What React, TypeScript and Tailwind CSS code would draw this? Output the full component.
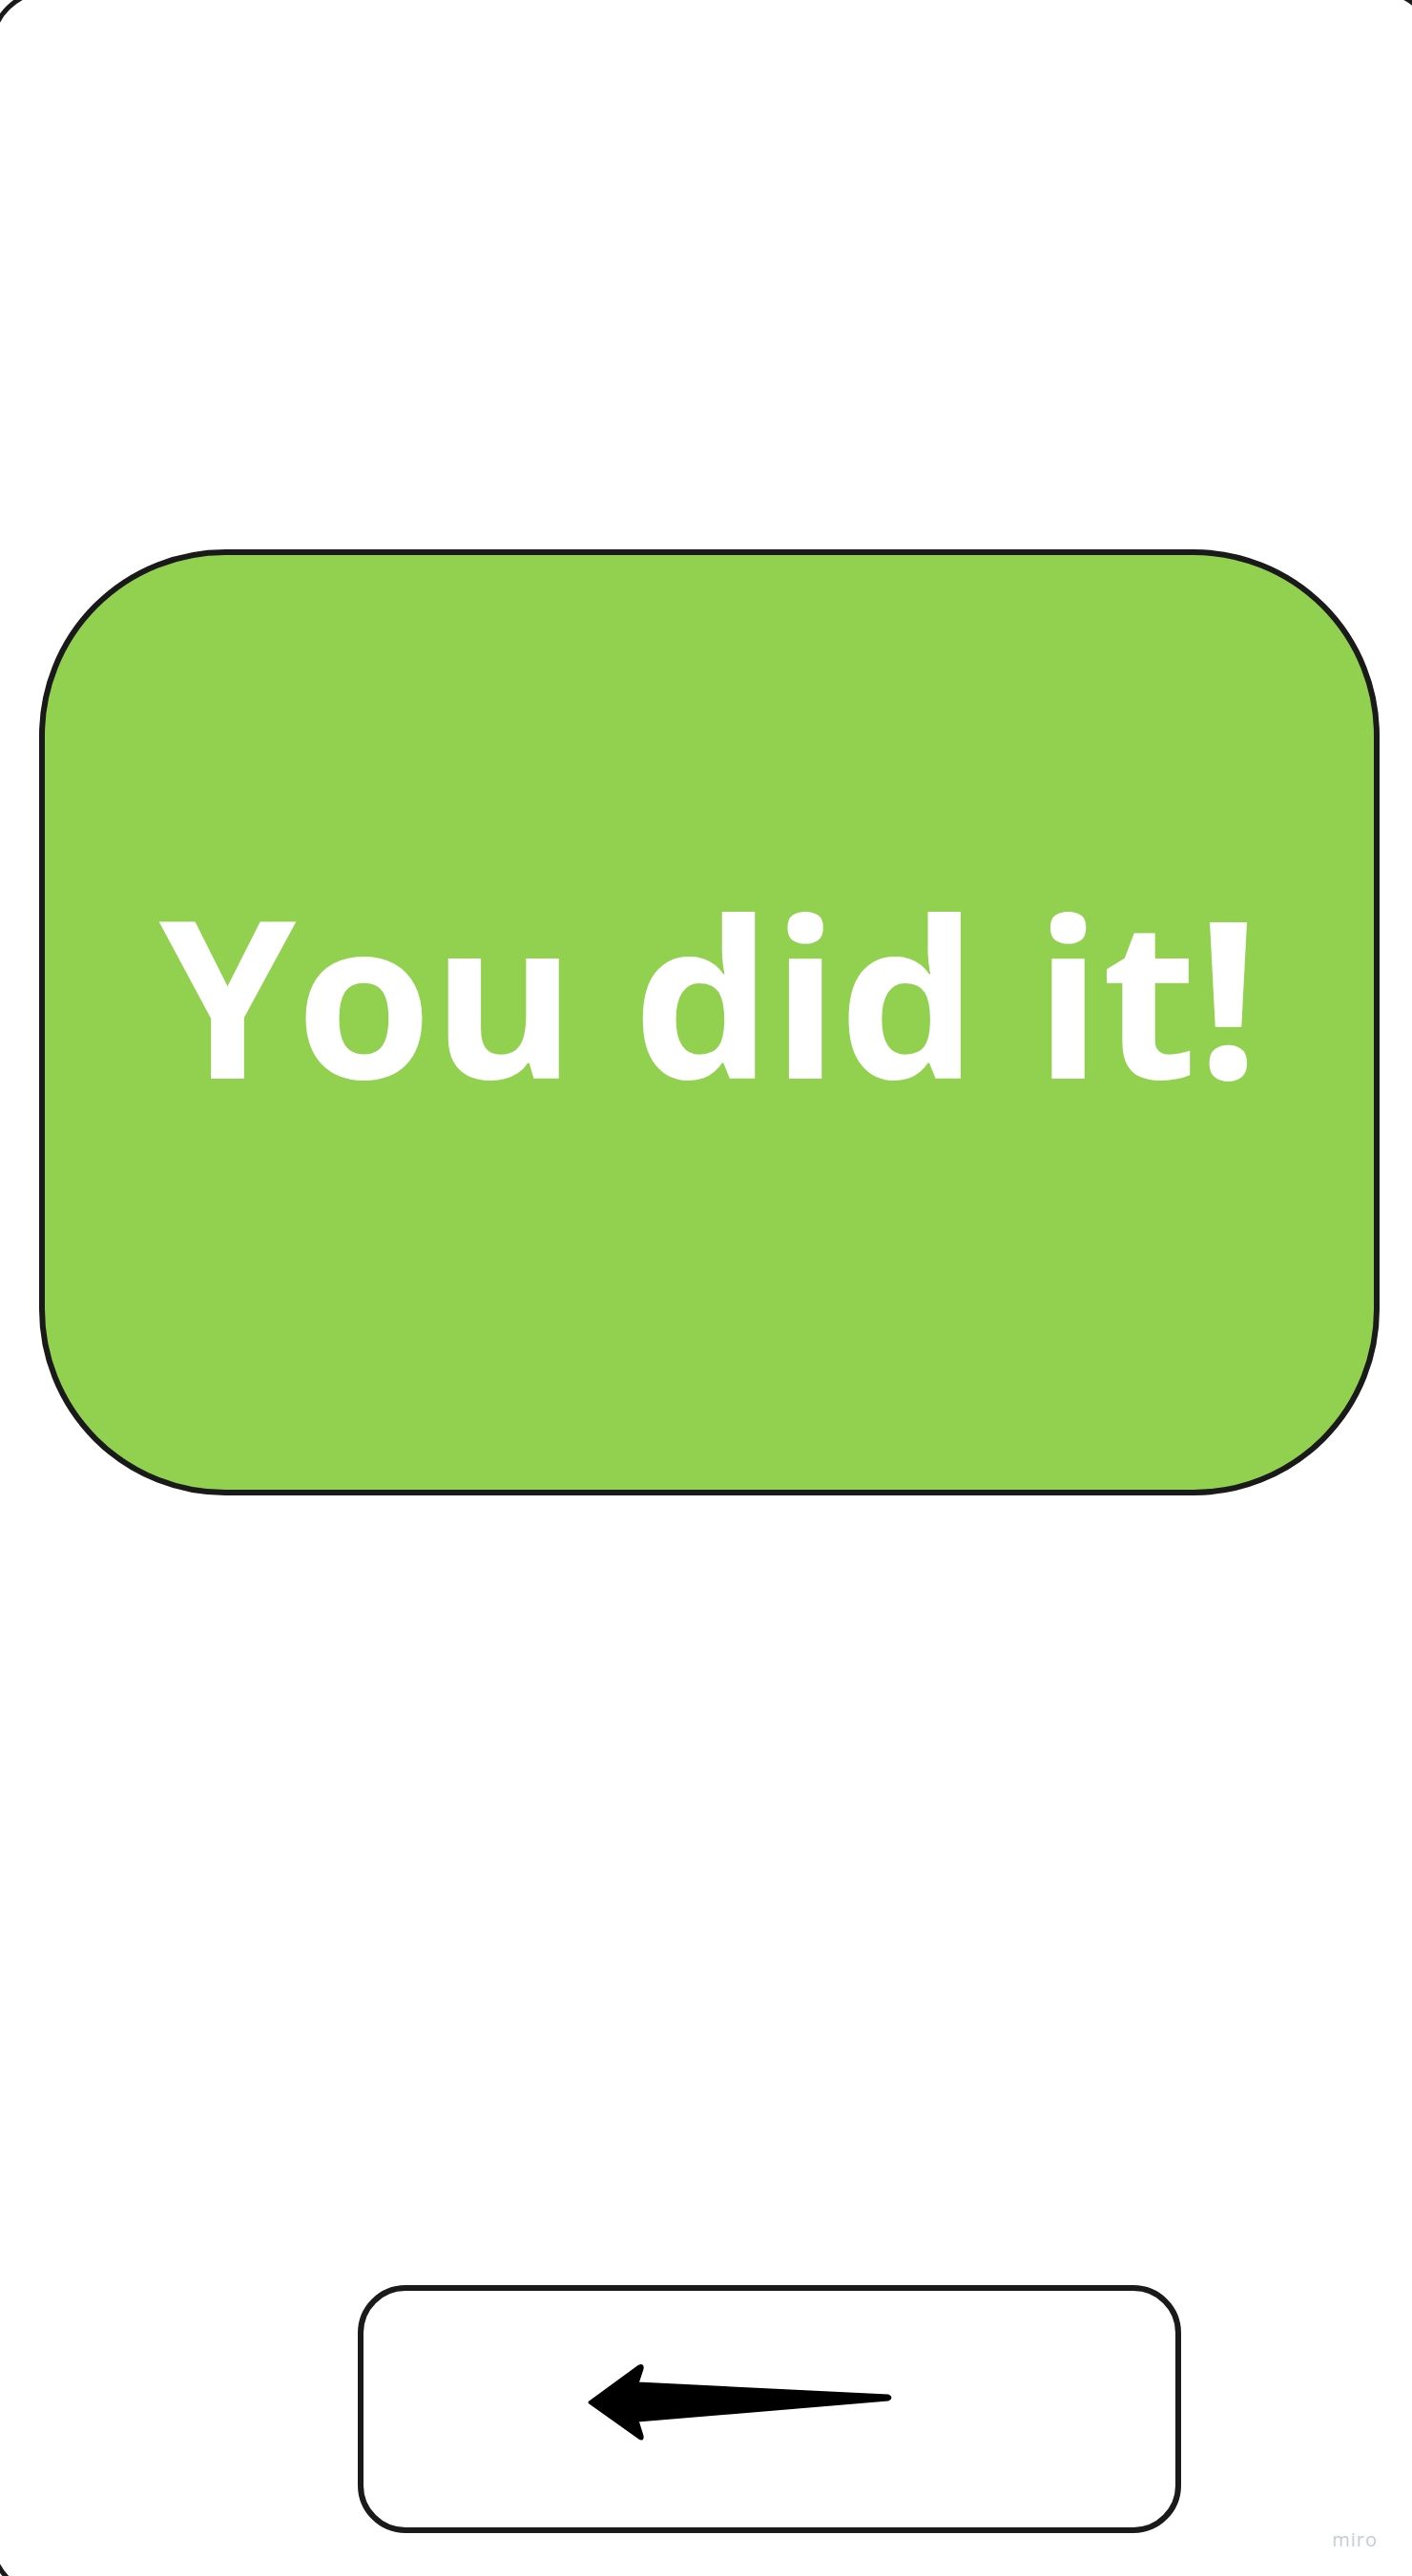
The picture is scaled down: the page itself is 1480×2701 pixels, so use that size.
const BackArrow = () => (
  <svg width="340" height="120" viewBox="0 0 340 120" className="block">
    <path
      d="M18 59 L70 21 Q74 19 73 24 L68 39 L331 52 Q335 54 331 56 L68 78 L73 94 Q74 99 70 96 Z"
      fill="#000"
      stroke="#000"
      strokeWidth="3"
      strokeLinejoin="round"
    />
  </svg>
);

const App = () => {
  return (
    <div className="relative w-[1480px] h-[2701px] overflow-hidden bg-white font-['Open_Sans',sans-serif]">
      {/* board frame, mostly off-screen */}
      <div className="pointer-events-none absolute top-[-11px] left-[-11px] right-[-26px] bottom-[-22px] rounded-[60px] border-[5px] border-[#1a1a1a]" />

      <div className="flex flex-col pt-[576px]">
        <div className="ml-[41px] w-[1405px] h-[992px] rounded-[195px] border-[6px] border-[#1a1a1a] bg-[#92d050] flex items-center justify-center pb-[60px]">
          <p className="text-white font-bold text-[230px] leading-none whitespace-nowrap">
            You did it!
          </p>
        </div>

        <button
          type="button"
          className="mt-[828px] ml-[375px] w-[863px] h-[260px] rounded-[50px] border-[6px] border-[#1a1a1a] bg-white flex items-center"
        >
          <div className="ml-[219px] mb-[12px]">
            <BackArrow />
          </div>
        </button>
      </div>

      <div className="absolute right-[36px] bottom-[28px] text-[20px] leading-none text-[#c9cbd6] tracking-[1px]">
        miro
      </div>
    </div>
  );
};

export default App;
